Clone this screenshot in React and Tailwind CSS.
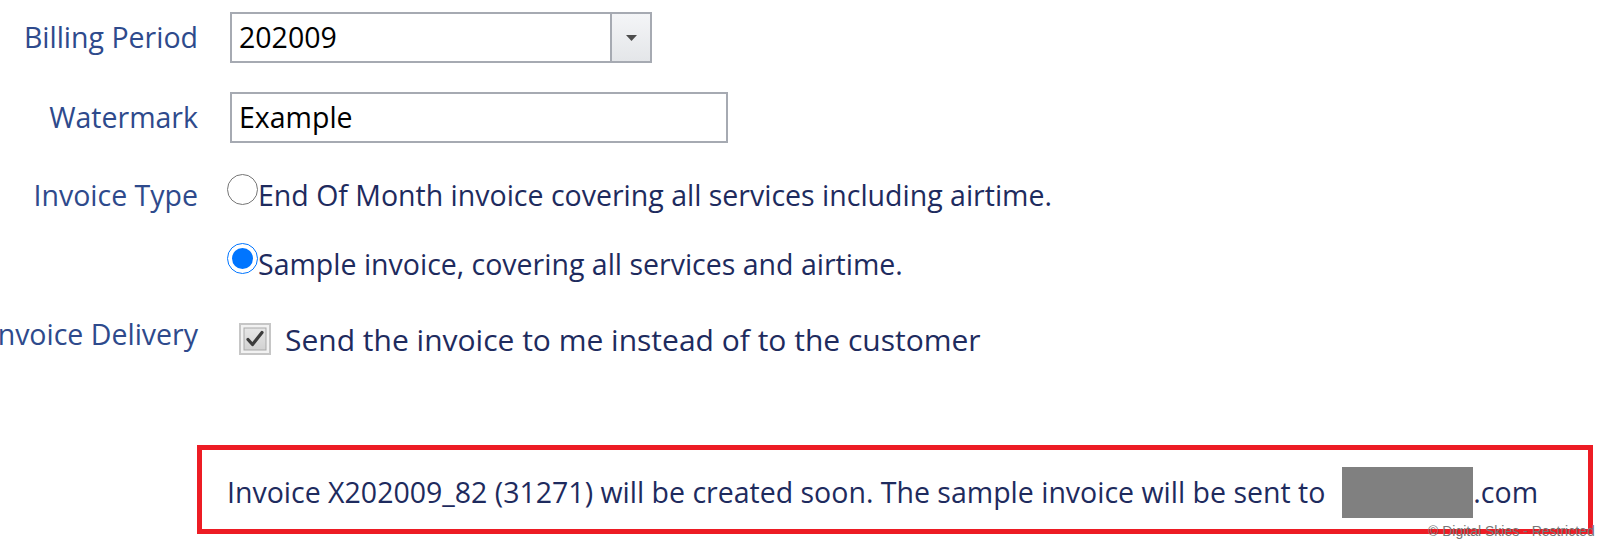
export default function App() {
  const font = { fontFamily: '"Open Sans", "Noto Sans", sans-serif' }

  return (
    <div className="relative w-[1603px] h-[541px] overflow-hidden bg-white" style={font}>
      <div className="pt-[12px] text-[28.5px]">
        {/* Billing period */}
        <div className="flex items-center h-[51px]">
          <div className="w-[198px] flex justify-end">
            <span className="whitespace-nowrap text-[#2e4a8c]">Billing Period</span>
          </div>
          <div className="ml-[32px] w-[422px] h-[51px] flex border-2 border-[#a6aab2] bg-white">
            <div className="flex-1 flex items-center pl-[7px] text-black">202009</div>
            <div className="w-[40px] flex items-center justify-center border-l-2 border-[#a6aab2] bg-gradient-to-b from-[#f4f5f7] to-[#e4e6e9]">
              <svg width="11" height="6" viewBox="0 0 11 6">
                <path d="M0 0h11L5.5 6z" fill="#4d4d4d" />
              </svg>
            </div>
          </div>
        </div>

        {/* Watermark */}
        <div className="flex items-center h-[51px] mt-[29px]">
          <div className="w-[198px] flex justify-end">
            <span className="whitespace-nowrap text-[#2e4a8c]">Watermark</span>
          </div>
          <div className="ml-[32px] w-[498px] h-[51px] flex items-center border-2 border-[#a6aab2] pl-[7px] text-black">
            Example
          </div>
        </div>

        {/* Invoice type */}
        <div className="flex items-start mt-[31px]">
          <div className="w-[198px] flex justify-end mt-[1px]">
            <span className="whitespace-nowrap text-[#2e4a8c] leading-[40px]">Invoice Type</span>
          </div>
          <div className="ml-[29px] text-[#1e2b5e]">
            <div className="flex items-start whitespace-nowrap">
              <span className="w-[31px] h-[31px] shrink-0 rounded-full border-[1.5px] border-[#767676] bg-white"></span>
              <span className="leading-[40px] mt-[1px]">End Of Month invoice covering all services including airtime.</span>
            </div>
            <div className="flex items-start whitespace-nowrap mt-[28px]">
              <span className="w-[31px] h-[31px] shrink-0 flex items-center justify-center rounded-full border-[1.5px] border-[#0075ff] bg-white">
                <span className="w-[21px] h-[21px] rounded-full bg-[#0075ff]"></span>
              </span>
              <span className="leading-[40px] mt-[1px]">Sample invoice, covering all services and airtime.</span>
            </div>
          </div>
        </div>

        {/* Invoice delivery */}
        <div className="flex items-center h-[32px] mt-[39px]">
          <div className="w-[198px] flex justify-end -mt-[9px]">
            <span className="whitespace-nowrap text-[#2e4a8c]">Invoice Delivery</span>
          </div>
          <div className="ml-[41px] flex items-center text-[#1e2b5e]">
            <svg width="32" height="32" viewBox="0 0 32 32">
              <defs>
                <linearGradient id="cb" x1="0" y1="0" x2="0" y2="1">
                  <stop offset="0" stopColor="#e6e6e6" />
                  <stop offset="1" stopColor="#d2d2d2" />
                </linearGradient>
              </defs>
              <rect x="1" y="1" width="30" height="30" fill="#f2f2f2" stroke="#c6c6c6" strokeWidth="2" />
              <rect x="5" y="5" width="22" height="22" fill="url(#cb)" stroke="#a9a9a9" strokeWidth="1" />
              <path d="M9 16.5l4.5 5L23 9.5" fill="none" stroke="#3c3c3c" strokeWidth="3.2" strokeLinecap="round" strokeLinejoin="round" />
            </svg>
            <span className="ml-[14px] whitespace-nowrap text-[30px]">Send the invoice to me instead of to the customer</span>
          </div>
        </div>

        {/* Result message */}
        <div className="ml-[197px] mt-[90px] w-[1396px] h-[89px] border-[5px] border-[#ed1c24] flex items-center pl-[25px] pt-[6px] text-[#1e2b5e] whitespace-nowrap">
          <span>Invoice X202009_82 (31271) will be created soon. The sample invoice will be sent to</span>
          <span className="inline-block w-[131px] h-[51px] bg-[#808080] ml-[17px]"></span>
          <span>.com</span>
        </div>
      </div>

      <div
        className="absolute left-[1428px] top-[523px] text-[14px] leading-[16px] text-[#777777] whitespace-nowrap"
        style={{ fontFamily: '"Liberation Sans", Arial, sans-serif' }}
      >
        © Digital Skies - Restricted
      </div>
    </div>
  )
}
